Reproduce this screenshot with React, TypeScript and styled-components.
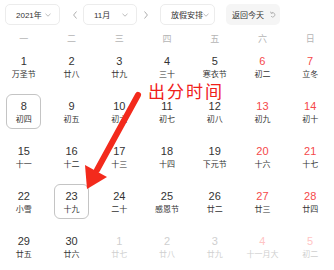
import React from "react";
import styled, { createGlobalStyle } from "styled-components";

const Global = createGlobalStyle`
  html, body { margin: 0; padding: 0; background: #fff; }
  body { font-family: "Liberation Sans", "Noto Sans CJK SC", sans-serif; }
`;

const Page = styled.div`
  position: relative;
  width: 334px;
  height: 270px;
  overflow: hidden;
  background: #fff;
`;

const Toolbar = styled.div`
  display: flex;
  align-items: center;
  height: 21px;
  padding: 4px 5px;
`;

const Select = styled.div<{ $w: number; $pl: number; $pr: number }>`
  box-sizing: border-box;
  display: flex;
  align-items: center;
  justify-content: space-between;
  width: ${(p) => p.$w}px;
  height: 21px;
  padding: 0 ${(p) => p.$pr}px 0 ${(p) => p.$pl}px;
  border: 1px solid #ececec;
  border-radius: 5px;
  font-size: 8px;
  color: #333;
  white-space: nowrap;
  svg { flex-shrink: 0; }
`;

const TodayBtn = styled.div`
  box-sizing: border-box;
  display: flex;
  align-items: center;
  width: 54px;
  height: 21px;
  margin-left: 11px;
  padding-left: 6px;
  gap: 6px;
  border-radius: 5px;
  background: #f5f5f5;
  font-size: 8px;
  color: #333;
  white-space: nowrap;
  svg { flex-shrink: 0; }
`;

const Nav = styled.div<{ $ml: number; $mr: number }>`
  display: flex;
  align-items: center;
  margin-left: ${(p) => p.$ml}px;
  margin-right: ${(p) => p.$mr}px;
`;

const WeekRow = styled.div`
  display: grid;
  grid-template-columns: repeat(7, 1fr);
  height: 20px;
  align-items: center;
`;

const WeekLabel = styled.div`
  text-align: center;
  font-size: 9px;
  line-height: 20px;
  color: #b5b5b5;
  font-family: "Noto Sans CJK SC", sans-serif;
`;

const Grid = styled.div`
  display: grid;
  grid-template-columns: repeat(7, 1fr);
  grid-auto-rows: 45px;
`;

const Cell = styled.div`
  display: flex;
  justify-content: center;
  align-items: flex-start;
`;

const DayBox = styled.div<{ $boxed: boolean }>`
  box-sizing: border-box;
  width: 35px;
  height: 35px;
  display: flex;
  flex-direction: column;
  align-items: center;
  justify-content: center;
  border: 1px solid ${(p) => (p.$boxed ? "#c4c4c4" : "transparent")};
  border-radius: 6px;
`;

const DayNum = styled.div<{ $color: string }>`
  font-size: 11px;
  line-height: 13px;
  color: ${(p) => p.$color};
`;

const Lunar = styled.div<{ $color: string }>`
  font-size: 8px;
  line-height: 11px;
  white-space: nowrap;
  color: ${(p) => p.$color};
  font-family: "Noto Sans CJK SC", sans-serif;
`;

const Note = styled.div`
  position: absolute;
  left: 148px;
  top: 83px;
  font-size: 17px;
  line-height: 16px;
  letter-spacing: 2px;
  color: #f0201a;
  font-family: "Noto Sans CJK SC", sans-serif;
`;

const ArrowSvg = styled.svg`
  position: absolute;
  left: 0;
  top: 0;
  pointer-events: none;
`;

const Caret = () => (
  <svg width="6" height="4" viewBox="0 0 6 4">
    <path d="M0.5 0.8 L3 3.2 L5.5 0.8" fill="none" stroke="#aaa" strokeWidth="0.8" />
  </svg>
);

const Chevron = ({ dir }: { dir: "l" | "r" }) => (
  <svg width="4" height="8" viewBox="0 0 4 8">
    <path
      d={dir === "l" ? "M3.5 0.5 L0.6 4 L3.5 7.5" : "M0.5 0.5 L3.4 4 L0.5 7.5"}
      fill="none"
      stroke="#999"
      strokeWidth="0.8"
    />
  </svg>
);

const Undo = () => (
  <svg width="6" height="7" viewBox="0 0 6 7">
    <path d="M1.2 2.2 A2.2 2.2 0 1 1 1 5.2" fill="none" stroke="#aaa" strokeWidth="0.8" />
    <path d="M0.4 0.6 L1.2 2.4 L3 1.8" fill="none" stroke="#aaa" strokeWidth="0.8" />
  </svg>
);

type Day = { n: number; l: string; other?: boolean; boxed?: boolean };

const days: Day[] = [
  { n: 1, l: "万圣节" }, { n: 2, l: "廿八" }, { n: 3, l: "廿九" }, { n: 4, l: "三十" },
  { n: 5, l: "寒衣节" }, { n: 6, l: "初二" }, { n: 7, l: "立冬" },
  { n: 8, l: "初四", boxed: true }, { n: 9, l: "初五" }, { n: 10, l: "初六" }, { n: 11, l: "初七" },
  { n: 12, l: "初八" }, { n: 13, l: "初九" }, { n: 14, l: "初十" },
  { n: 15, l: "十一" }, { n: 16, l: "十二" }, { n: 17, l: "十三" }, { n: 18, l: "十四" },
  { n: 19, l: "下元节" }, { n: 20, l: "十六" }, { n: 21, l: "十七" },
  { n: 22, l: "小雪" }, { n: 23, l: "十九", boxed: true }, { n: 24, l: "二十" }, { n: 25, l: "感恩节" },
  { n: 26, l: "廿二" }, { n: 27, l: "廿三" }, { n: 28, l: "廿四" },
  { n: 29, l: "廿五" }, { n: 30, l: "廿六" }, { n: 1, l: "廿七", other: true }, { n: 2, l: "廿八", other: true },
  { n: 3, l: "廿九", other: true }, { n: 4, l: "十一月大", other: true }, { n: 5, l: "初二", other: true },
];

const weekdays = ["一", "二", "三", "四", "五", "六", "日"];

export default function App() {
  return (
    <Page>
      <Global />
      <Toolbar>
        <Select $w={55} $pl={10} $pr={8}>
          <span>2021年</span>
          <Caret />
        </Select>
        <Nav $ml={13} $mr={6}>
          <Chevron dir="l" />
        </Nav>
        <Select $w={54} $pl={10} $pr={8}>
          <span>11月</span>
          <Caret />
        </Select>
        <Nav $ml={7} $mr={12}>
          <Chevron dir="r" />
        </Nav>
        <Select $w={55} $pl={10} $pr={6}>
          <span>放假安排</span>
          <Caret />
        </Select>
        <TodayBtn>
          <span>返回今天</span>
          <Undo />
        </TodayBtn>
      </Toolbar>
      <WeekRow>
        {weekdays.map((w) => (
          <WeekLabel key={w}>{w}</WeekLabel>
        ))}
      </WeekRow>
      <Grid>
        {days.map((d, i) => {
          const weekend = i % 7 >= 5;
          const numColor = d.other ? (weekend ? "#ffc4c4" : "#cfcfcf") : weekend ? "#f5484a" : "#333";
          const lunarColor = d.other ? "#cfcfcf" : "#333";
          return (
            <Cell key={i}>
              <DayBox $boxed={!!d.boxed}>
                <DayNum $color={numColor}>{d.n}</DayNum>
                <Lunar $color={lunarColor}>{d.l}</Lunar>
              </DayBox>
            </Cell>
          );
        })}
      </Grid>
      <Note>出分时间</Note>
      <ArrowSvg width="334" height="270" viewBox="0 0 334 270">
        <line x1="138" y1="95" x2="97" y2="170" stroke="#f32a1c" strokeWidth="6" strokeLinecap="round" />
        <polygon points="87,189 85,165 107,177" fill="#f32a1c" />
      </ArrowSvg>
    </Page>
  );
}
